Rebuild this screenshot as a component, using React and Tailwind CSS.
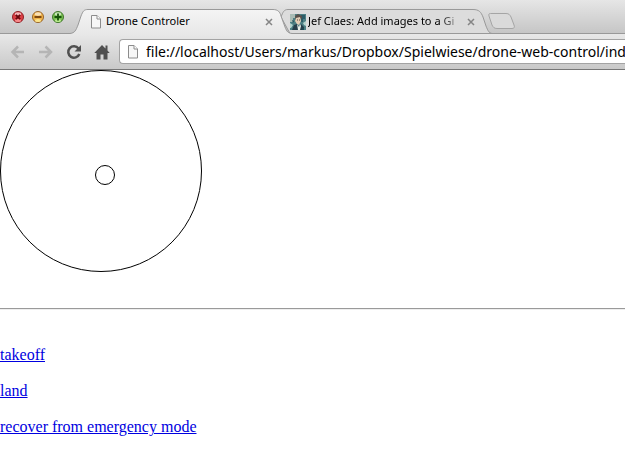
import React from "react";

const uiFont = "font-['Lucida_Grande','Noto_Sans',sans-serif]";

function WindowButton({ label, edge, fill, glow, mark }) {
  return (
    <button type="button" aria-label={label} className="h-3 w-3">
      <svg viewBox="0 0 12 12" className="h-3 w-3">
        <circle cx="6" cy="6" r="5.5" fill={fill} stroke={edge} />
        <ellipse cx="6" cy="3" rx="3.2" ry="1.7" fill="#fff" opacity="0.6" />
        <ellipse cx="6" cy="9.4" rx="3" ry="1.5" fill={glow} opacity="0.8" />
        {mark}
      </svg>
    </button>
  );
}

function PageIcon() {
  return (
    <svg viewBox="0 0 12 15" className="h-[15px] w-3 shrink-0">
      <path d="M1.5 1.5h5.5l3.5 3.5v9h-9z" fill="#f7f7f7" stroke="#8c8c8c" />
      <path d="M7 1.5v3.5h3.5" fill="#fff" stroke="#8c8c8c" />
    </svg>
  );
}

function CloseTab({ label }) {
  return (
    <button type="button" aria-label={label} className="h-2 w-2 shrink-0">
      <svg viewBox="0 0 8 8" className="h-2 w-2">
        <path d="M1 1l6 6M7 1l-6 6" stroke="#858585" strokeWidth="1.5" />
      </svg>
    </button>
  );
}

function Portrait() {
  return (
    <svg viewBox="0 0 16 16" className="h-4 w-4 shrink-0">
      <rect width="16" height="16" fill="#4d8084" />
      <path d="M0 0h5v4H3v4H0z" fill="#a9bcb5" />
      <path d="M11 1h4v4h-2v3h-2z" fill="#2c5d68" />
      <path d="M5 2l3-2 4 2v3l-2-1-3 1-1 3z" fill="#59504a" />
      <path d="M6 4l4-1 1 4-2 4-2-1-2-3z" fill="#e4cdb5" />
      <path d="M7 6h1M9 6h1" stroke="#54483f" />
      <path d="M2 16l2-5 3-1 2 3 2-3 3 3v3z" fill="#263f4b" />
      <path d="M7 10l2 3 1-3 1 2-1 4H8z" fill="#e8efe9" />
      <path d="M0 9l3 2-2 3H0zM13 9l3-2v5l-2-1z" fill="#b5d3cd" />
      <path d="M2 6l2 1-1 2zM12 14h2v2h-2z" fill="#1f4953" />
    </svg>
  );
}

function TitleBar() {
  return (
    <header className="flex h-[34px] items-end border-b border-[#999] bg-linear-to-b from-[#e6e6e6] to-[#c6c6c6]">
      <div className="mb-[10px] ml-3 flex gap-2">
        <WindowButton
          label="Close window" edge="#8d2226" fill="#dc3f45" glow="#ff9c9c"
          mark={<path d="M3.8 3.8l4.4 4.4M8.2 3.8l-4.4 4.4" stroke="#68070c" strokeWidth="1.8" />}
        />
        <WindowButton
          label="Minimize window" edge="#97642a" fill="#f0b249" glow="#fff09a"
          mark={<path d="M2.5 6h7" stroke="#713e0b" strokeWidth="1.8" />}
        />
        <WindowButton
          label="Zoom window" edge="#40762c" fill="#76bd50" glow="#cbf59c"
          mark={<path d="M2.5 6h7M6 2.5v7" stroke="#155308" strokeWidth="1.8" />}
        />
      </div>

      <div className={`-mb-px ml-[6px] flex items-end text-[11px] text-black ${uiFont}`} role="tablist">
        <div role="tab" aria-selected="true" className="relative z-10 h-[25px] w-[222px]">
          <svg viewBox="0 0 222 25" className="absolute inset-0 h-full w-full">
            <defs>
              <linearGradient id="activeTab" x1="0" y1="0" x2="0" y2="1">
                <stop offset="0" stopColor="#f4f4f4" />
                <stop offset="1" stopColor="#e8e8e8" />
              </linearGradient>
            </defs>
            <path d="M0 24.5C5 24 6 21 8 16L11 7C13 2 14 .5 18 .5H203C208 .5 210 3 211 7L215 18C217 23 218 24 222 24.5V25H0z" fill="url(#activeTab)" />
            <path d="M0 24.5C5 24 6 21 8 16L11 7C13 2 14 .5 18 .5H203C208 .5 210 3 211 7L215 18C217 23 218 24 222 24.5" fill="none" stroke="#999" />
          </svg>
          <div className="relative flex h-full items-center pl-5 pr-[19px]">
            <PageIcon />
            <span className="ml-1 flex-1 whitespace-nowrap">Drone Controler</span>
            <CloseTab label="Close Drone Controler" />
          </div>
        </div>
        <div role="tab" aria-selected="false" className="relative -ml-3 h-[25px] w-[212px]">
          <svg viewBox="0 0 212 25" className="absolute inset-0 h-full w-full">
            <path d="M1 8C3 3 4 .5 8 .5H193C199 .5 201 3 203 8L206 17C208 22 209 24 212 24.5H10z" fill="#dcdcdc" stroke="#999" />
          </svg>
          <div className="relative flex h-full items-center pl-[10px] pr-[17px]">
            <Portrait />
            <span className="ml-[2px] mr-1 flex-1 whitespace-nowrap mask-r-from-85% mask-r-to-100%">
              Jef Claes: Add images to a Gi
            </span>
            <CloseTab label="Close Jef Claes" />
          </div>
        </div>
      </div>

      <button type="button" aria-label="New tab" className="mb-1 -ml-1 h-4 w-7">
        <svg viewBox="0 0 28 16" className="h-4 w-7">
          <path d="M2.5 .5H18C21 .5 22 2 23 4L26 12C27 14.5 26 15.5 24 15.5H9C6 15.5 5 14 4 12L1 3C.5 1 1 .5 2.5 .5z" fill="#dadada" stroke="#a5a5a5" />
        </svg>
      </button>
    </header>
  );
}

function Toolbar() {
  return (
    <nav className="flex h-9 items-center border-b border-[#777] bg-linear-to-b from-[#e8e8e8] to-[#c9c9c9] pl-[10px]">
      <button type="button" aria-label="Back" className="h-4 w-4">
        <svg viewBox="0 0 16 16" className="h-4 w-4">
          <path d="M14 8H2.5M8 2.5L2.5 8L8 13.5" fill="none" stroke="#b5b5b5" strokeWidth="2.5" />
        </svg>
      </button>
      <button type="button" aria-label="Forward" className="ml-3 h-4 w-4">
        <svg viewBox="0 0 16 16" className="h-4 w-4">
          <path d="M1 8H13M7.5 2.5L13 8L7.5 13.5" fill="none" stroke="#b5b5b5" strokeWidth="2.5" />
        </svg>
      </button>
      <button type="button" aria-label="Reload" className="ml-3 h-4 w-4">
        <svg viewBox="0 0 16 16" className="h-4 w-4">
          <path d="M12.5 4.5A5.7 5.7 0 1 0 13.3 10" fill="none" stroke="#505050" strokeWidth="2.5" />
          <path d="M15 1v6.5H8.5z" fill="#505050" />
        </svg>
      </button>
      <button type="button" aria-label="Home" className="ml-3 h-4 w-4">
        <svg viewBox="0 0 16 16" className="h-4 w-4">
          <path d="M8 1L.3 9h2.2v6.5h4v-5h3v5h4V9h2.2L13.5 6.5V1.5h-2v3z" fill="#505050" />
        </svg>
      </button>
      <div className="ml-[9px] flex h-[25px] min-w-0 flex-1 items-center rounded-l-[4px] border border-r-0 border-[#a3a3a3] bg-white pl-[7px]">
        <PageIcon />
        <input
          type="text"
          aria-label="Address"
          defaultValue="file://localhost/Users/markus/Dropbox/Spielwiese/drone-web-control/ind"
          className={`ml-[7px] h-5 min-w-0 flex-1 bg-transparent text-sm text-black outline-none ${uiFont}`}
        />
      </div>
    </nav>
  );
}

export default function App() {
  return (
    <div className="min-h-screen overflow-hidden bg-white">
      <TitleBar />
      <Toolbar />
      <main className="font-['Liberation_Serif',serif] text-base leading-[18px] text-black">
        <svg viewBox="0 0 202 202" className="block h-[202px] w-[202px]" role="img" aria-label="Joystick">
          <circle cx="101" cy="101" r="100.5" fill="none" stroke="#000" />
          <circle cx="105" cy="105" r="9.5" fill="none" stroke="#000" />
        </svg>
        <hr className="mt-9 h-[2px] border-t border-b border-t-[#9a9a9a] border-b-[#eee]" />
        <ul className="mt-9 flex flex-col items-start gap-[18px]">
          <li><a href="#takeoff" className="text-[#0000e0] underline">takeoff</a></li>
          <li><a href="#land" className="text-[#0000e0] underline">land</a></li>
          <li><a href="#recover" className="text-[#0000e0] underline">recover from emergency mode</a></li>
        </ul>
      </main>
    </div>
  );
}
